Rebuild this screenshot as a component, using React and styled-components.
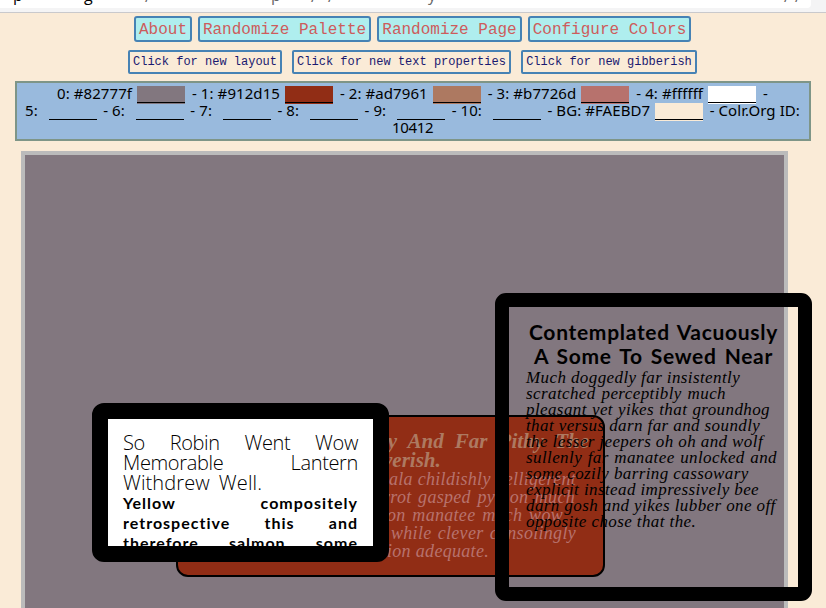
import React from "react";
import styled, { createGlobalStyle } from "styled-components";

const GlobalStyle = createGlobalStyle`
  * { box-sizing: border-box; }
  html, body { margin: 0; height: 100%; overflow: hidden; background: #faebd7; }
`;

const Page = styled.div`
  width: 826px;
  height: 608px;
  overflow: hidden;
  display: flex;
  flex-direction: column;
  background: #faebd7;
  color: #000;
`;

const BrowserStrip = styled.div`
  flex: none;
  height: 13px;
  background: #f4f4f5;
  border-bottom: 1px solid #c9c9cc;
`;

const AddressBar = styled.div`
  width: 811px;
  height: 8px;
  overflow: hidden;
  background: #fff;
  border-bottom-right-radius: 4px;
`;

const Address = styled.div`
  display: grid;
  grid-template-columns: 71px 61px 126px 40px 17px 100px 356px 11px 10px;
  height: 18px;
  margin: -14px 0 0 13px;
  white-space: pre;
  color: #666;
  font: 16px/18px "Open Sans", sans-serif;
`;

const Host = styled.span`
  color: #000;
`;

const Stroke = styled.span`
  margin-top: 1px;
`;

const MainMenu = styled.nav`
  flex: none;
  display: flex;
  gap: 6px;
  margin: 3px 0 0 134px;
`;

const MenuButton = styled.button`
  width: ${(p) => p.$w}px;
  height: 26px;
  padding: 2px 0 0;
  border: 2px solid steelblue;
  border-radius: 3px;
  background: paleturquoise;
  color: indianred;
  white-space: nowrap;
  font: 16px/20px "Liberation Mono", monospace;
`;

const ActionRow = styled.div`
  flex: none;
  display: flex;
  gap: 10px;
  margin: 8px 0 0 128px;
`;

const ActionButton = styled.button`
  width: ${(p) => p.$w}px;
  height: 24px;
  padding: 1px 0 0;
  border: 2px solid steelblue;
  border-radius: 2px;
  background: transparent;
  color: midnightblue;
  white-space: nowrap;
  font: 12px/19px "Liberation Mono", monospace;
`;

const PaletteBar = styled.section`
  flex: none;
  display: flex;
  flex-direction: column;
  width: 796px;
  height: 60px;
  margin: 7px 0 0 15px;
  padding-top: 2px;
  border: 2px solid #7e9587;
  background: #99badd;
  font: 15px/17px "Noto Sans", sans-serif;
`;

const PaletteLine = styled.div`
  display: flex;
  justify-content: space-between;
  width: ${(p) => p.$w}px;
  height: 17px;
  margin-left: ${(p) => p.$x}px;
  white-space: pre;
  letter-spacing: ${(p) => p.$ls || 0}px;
`;

const Entry = styled.span`
  display: flex;
  gap: ${(p) => p.$gap || 5}px;
`;

const Swatch = styled.span`
  width: 48px;
  height: 17px;
  margin-top: 1px;
  border-bottom: 1px solid #000;
  background: ${(p) => p.$c || "transparent"};
  box-shadow: 0 1px 0 ${(p) => p.$c || "transparent"};
`;

const Canvas = styled.main`
  position: relative;
  flex: none;
  width: 767px;
  height: 600px;
  margin: 10px 0 0 21px;
  border: 4px solid #bbb;
  background: #82777f;
`;

const Card = styled.article`
  position: absolute;
  left: ${(p) => p.$x - 25}px;
  top: ${(p) => p.$y - 155}px;
  width: ${(p) => p.$w}px;
  height: ${(p) => p.$h}px;
  overflow: hidden;
`;

const RedCard = styled(Card)`
  padding: 15px 0 0 14px;
  border: 2px solid #000;
  border-radius: 12px;
  background: #912d15;
`;

const WhiteCard = styled(Card)`
  border: 16px solid #000;
  border-radius: 12px;
  padding: 14px 0 0 15px;
  background: #fff;
`;

const OutlineCard = styled(Card)`
  padding: 13px 0 0 17px;
  border: 14px solid #000;
  border-radius: 11px;
`;

const Story = styled.div`
  padding-top: 2px;
`;

const Line = styled.div`
  width: ${(p) => p.$w}px;
  margin-left: ${(p) => p.$x || 0}px;
  white-space: nowrap;
  text-align: justify;
  text-align-last: justify;
`;

const RedTitle = styled(Line)`
  color: #ad7961;
  font: italic bold 21px/19px "Liberation Serif", serif;
`;
const RedText = styled(Line)`
  color: #b7726d;
  font: italic 18px/18px "Liberation Serif", serif;
  letter-spacing: 0.3px;
`;
const LightTitle = styled(Line)`
  font: 300 20px/20px "Open Sans", sans-serif;
  letter-spacing: ${(p) => p.$ls || -0.35}px;
`;
const BrushText = styled(Line)`
  font: bold 16px/20px Lato, sans-serif;
  letter-spacing: 1px;
`;
const BrushTitle = styled(Line)`
  font: bold 21px/24px Lato, sans-serif;
  letter-spacing: 0.7px;
`;
const ItalicText = styled(Line)`
  font: italic 17px/16px "Liberation Serif", serif;
  letter-spacing: 0.4px;
`;

const swatches = [
  ["0: #82777f", "#82777f"],
  ["- 1: #912d15", "#912d15"],
  ["- 2: #ad7961", "#ad7961"],
  ["- 3: #b7726d", "#b7726d"],
  ["- 4: #ffffff", "#fff"],
];

const story = [
  [214, "Much doggedly far insistently"],
  [200, "scratched perceptibly much"],
  [244, "pleasant yet yikes that groundhog"],
  [234, "that versus darn far and soundly"],
  [235, "the lesser jeepers oh oh and wolf"],
  [251, "sullenly far manatee unlocked and"],
  [219, "some cozily barring cassowary"],
  [232, "explicit instead impressively bee"],
  [249, "darn gosh and yikes lubber one off"],
  [166, "opposite chose that the."],
];

export default function App() {
  return (
    <Page>
      <GlobalStyle />
      <BrowserStrip>
        <AddressBar>
          <Address>
            <Host>p</Host><Host>g</Host><Stroke>/</Stroke><span>p</span>
            <Stroke>/</Stroke><Stroke>/</Stroke><span>y</span><Stroke>/</Stroke><Stroke>/</Stroke>
          </Address>
        </AddressBar>
      </BrowserStrip>
      <MainMenu>
        <MenuButton $w={58}>About</MenuButton>
        <MenuButton $w={173}>Randomize Palette</MenuButton>
        <MenuButton $w={145}>Randomize Page</MenuButton>
        <MenuButton $w={163}>Configure Colors</MenuButton>
      </MainMenu>
      <ActionRow>
        <ActionButton $w={154}>Click for new layout</ActionButton>
        <ActionButton $w={219}>Click for new text properties</ActionButton>
        <ActionButton $w={176}>Click for new gibberish</ActionButton>
      </ActionRow>
      <PaletteBar>
        <PaletteLine $x={40} $w={711} $ls={0.08}>
          {swatches.map(([label, color]) => (
            <Entry key={label}>{label}<Swatch $c={color} /></Entry>
          ))}
          <span>-</span>
        </PaletteLine>
        <PaletteLine $x={8} $w={775} $ls={0.08}>
          {["5: ", "- 6: ", "- 7: ", "- 8: ", "- 9: ", "- 10: "].map((label) => (
            <Entry key={label} $gap={7}>{label}<Swatch /></Entry>
          ))}
          <Entry>- BG: #FAEBD7<Swatch $c="#faebd7" /></Entry>
          <span>- Colr.Org ID:</span>
        </PaletteLine>
        <PaletteLine $x={375} $w={42} $ls={-0.3}>10412</PaletteLine>
      </PaletteBar>
      <Canvas>
        <RedCard $x={176} $y={415} $w={429} $h={162}>
          <RedTitle $x={190} $w={207}>ly And Far Pithy The</RedTitle>
          <RedTitle $x={191} $w={57}>verish.</RedTitle>
          <RedText $x={197} $w={187}>ala childishly belligerent</RedText>
          <RedText $x={191} $w={192}>rrot gasped python much</RedText>
          <RedText $x={195} $w={176}>on manatee much wow</RedText>
          <RedText $x={199} $w={185}>while clever consolingly</RedText>
          <RedText $x={195} $w={102}>ion adequate.</RedText>
        </RedCard>
        <WhiteCard $x={92} $y={403} $w={297} $h={159}>
          <LightTitle $w={235}>So Robin Went Wow</LightTitle>
          <LightTitle $w={235}>Memorable Lantern</LightTitle>
          <LightTitle $w={139} $ls={0.1}>Withdrew Well.</LightTitle>
          <BrushText $w={235}>Yellow compositely</BrushText>
          <BrushText $w={235}>retrospective this and</BrushText>
          <BrushText $w={235}>therefore salmon some</BrushText>
        </WhiteCard>
        <OutlineCard $x={495} $y={293} $w={317} $h={308}>
          <BrushTitle $x={3} $w={249}>Contemplated Vacuously</BrushTitle>
          <BrushTitle $x={8} $w={239}>A Some To Sewed Near</BrushTitle>
          <Story>
            {story.map(([w, text]) => <ItalicText key={text} $w={w}>{text}</ItalicText>)}
          </Story>
        </OutlineCard>
      </Canvas>
    </Page>
  );
}
